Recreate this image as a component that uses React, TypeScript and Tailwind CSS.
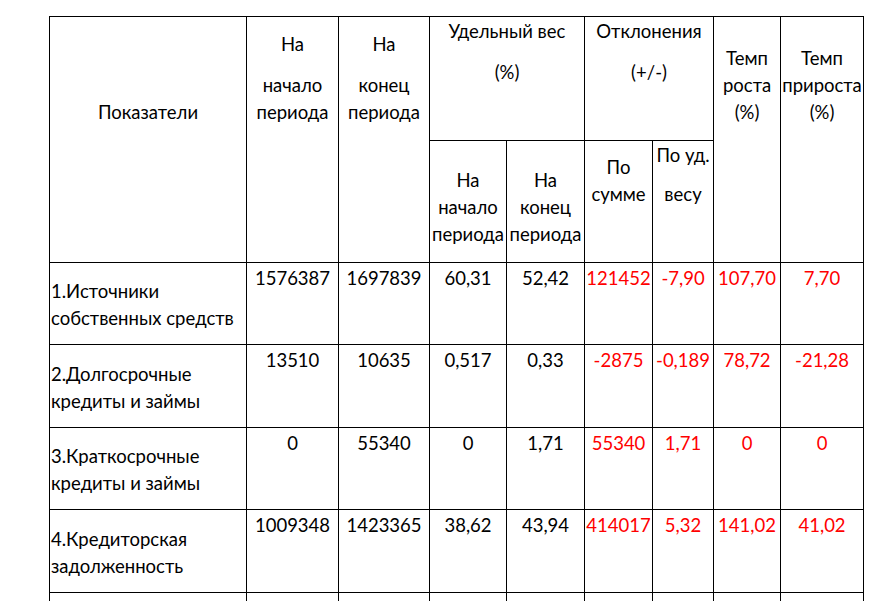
const rows = [
  {
    label: ['1.Источники', 'собственных средств'],
    black: ['1576387', '1697839', '60,31', '52,42'],
    red: ['121452', '-7,90', '107,70', '7,70'],
    h: 'h-[82px]',
  },
  {
    label: ['2.Долгосрочные', 'кредиты и займы'],
    black: ['13510', '10635', '0,517', '0,33'],
    red: ['-2875', '-0,189', '78,72', '-21,28'],
    h: 'h-[83px]',
  },
  {
    label: ['3.Краткосрочные', 'кредиты и займы'],
    black: ['0', '55340', '0', '1,71'],
    red: ['55340', '1,71', '0', '0'],
    h: 'h-[82px]',
  },
  {
    label: ['4.Кредиторская', 'задолженность'],
    black: ['1009348', '1423365', '38,62', '43,94'],
    red: ['414017', '5,32', '141,02', '41,02'],
    h: 'h-[83px]',
  },
]

const widths = [197, 92, 91, 77, 78, 68, 61, 67, 83]

const cell = 'border border-black p-0 align-top text-center'

export default function App() {
  return (
    <div className="min-h-[601px] bg-white pl-[49px] pt-[16px] text-black text-[18.5px] leading-[27px] [font-family:Lato,'Noto_Sans',sans-serif]">
      <table className="table-fixed border-collapse w-[814px]">
        <colgroup>
          {widths.map((w, i) => (
            <col key={i} style={{ width: w }} />
          ))}
        </colgroup>
        <thead>
          <tr className="h-[124px]">
            <th rowSpan={2} className={`${cell} font-normal pt-[82px]`}>
              Показатели
            </th>
            <th rowSpan={2} className={`${cell} font-normal pt-[14px]`}>
              <div className="mb-[14px]">На</div>
              <div>начало</div>
              <div>периода</div>
            </th>
            <th rowSpan={2} className={`${cell} font-normal pt-[14px]`}>
              <div className="mb-[14px]">На</div>
              <div>конец</div>
              <div>периода</div>
            </th>
            <th colSpan={2} className={`${cell} font-normal pt-[1px]`}>
              <div className="mb-[14px]">Удельный вес</div>
              <div>(%)</div>
            </th>
            <th colSpan={2} className={`${cell} font-normal pt-[1px]`}>
              <div className="mb-[14px]">Отклонения</div>
              <div>(+/-)</div>
            </th>
            <th rowSpan={2} className={`${cell} font-normal pt-[28px]`}>
              <div>Темп</div>
              <div>роста</div>
              <div>(%)</div>
            </th>
            <th rowSpan={2} className={`${cell} font-normal pt-[28px]`}>
              <div>Темп</div>
              <div>прироста</div>
              <div>(%)</div>
            </th>
          </tr>
          <tr className="h-[122px]">
            <th className={`${cell} font-normal pt-[26px]`}>
              <div>На</div>
              <div>начало</div>
              <div>периода</div>
            </th>
            <th className={`${cell} font-normal pt-[26px]`}>
              <div>На</div>
              <div>конец</div>
              <div>периода</div>
            </th>
            <th className={`${cell} font-normal pt-[13px]`}>
              <div>По</div>
              <div>сумме</div>
            </th>
            <th className={`${cell} font-normal pt-[1px]`}>
              <div className="mb-[12px]">По уд.</div>
              <div>весу</div>
            </th>
          </tr>
        </thead>
        <tbody>
          {rows.map((r) => (
            <tr key={r.label[0]} className={r.h}>
              <td className="border border-black p-0 pl-[1px] pt-[3px] align-middle text-left">
                <div>{r.label[0]}</div>
                <div>{r.label[1]}</div>
              </td>
              {r.black.map((v, i) => (
                <td key={'b' + i} className={`${cell} pt-[2px]`}>
                  {v}
                </td>
              ))}
              {r.red.map((v, i) => (
                <td key={'r' + i} className={`${cell} pt-[2px] text-[#ff0000]`}>
                  {v}
                </td>
              ))}
            </tr>
          ))}
          <tr className="h-[83px]">
            {widths.map((_, i) => (
              <td key={i} className={cell} />
            ))}
          </tr>
        </tbody>
      </table>
    </div>
  )
}
